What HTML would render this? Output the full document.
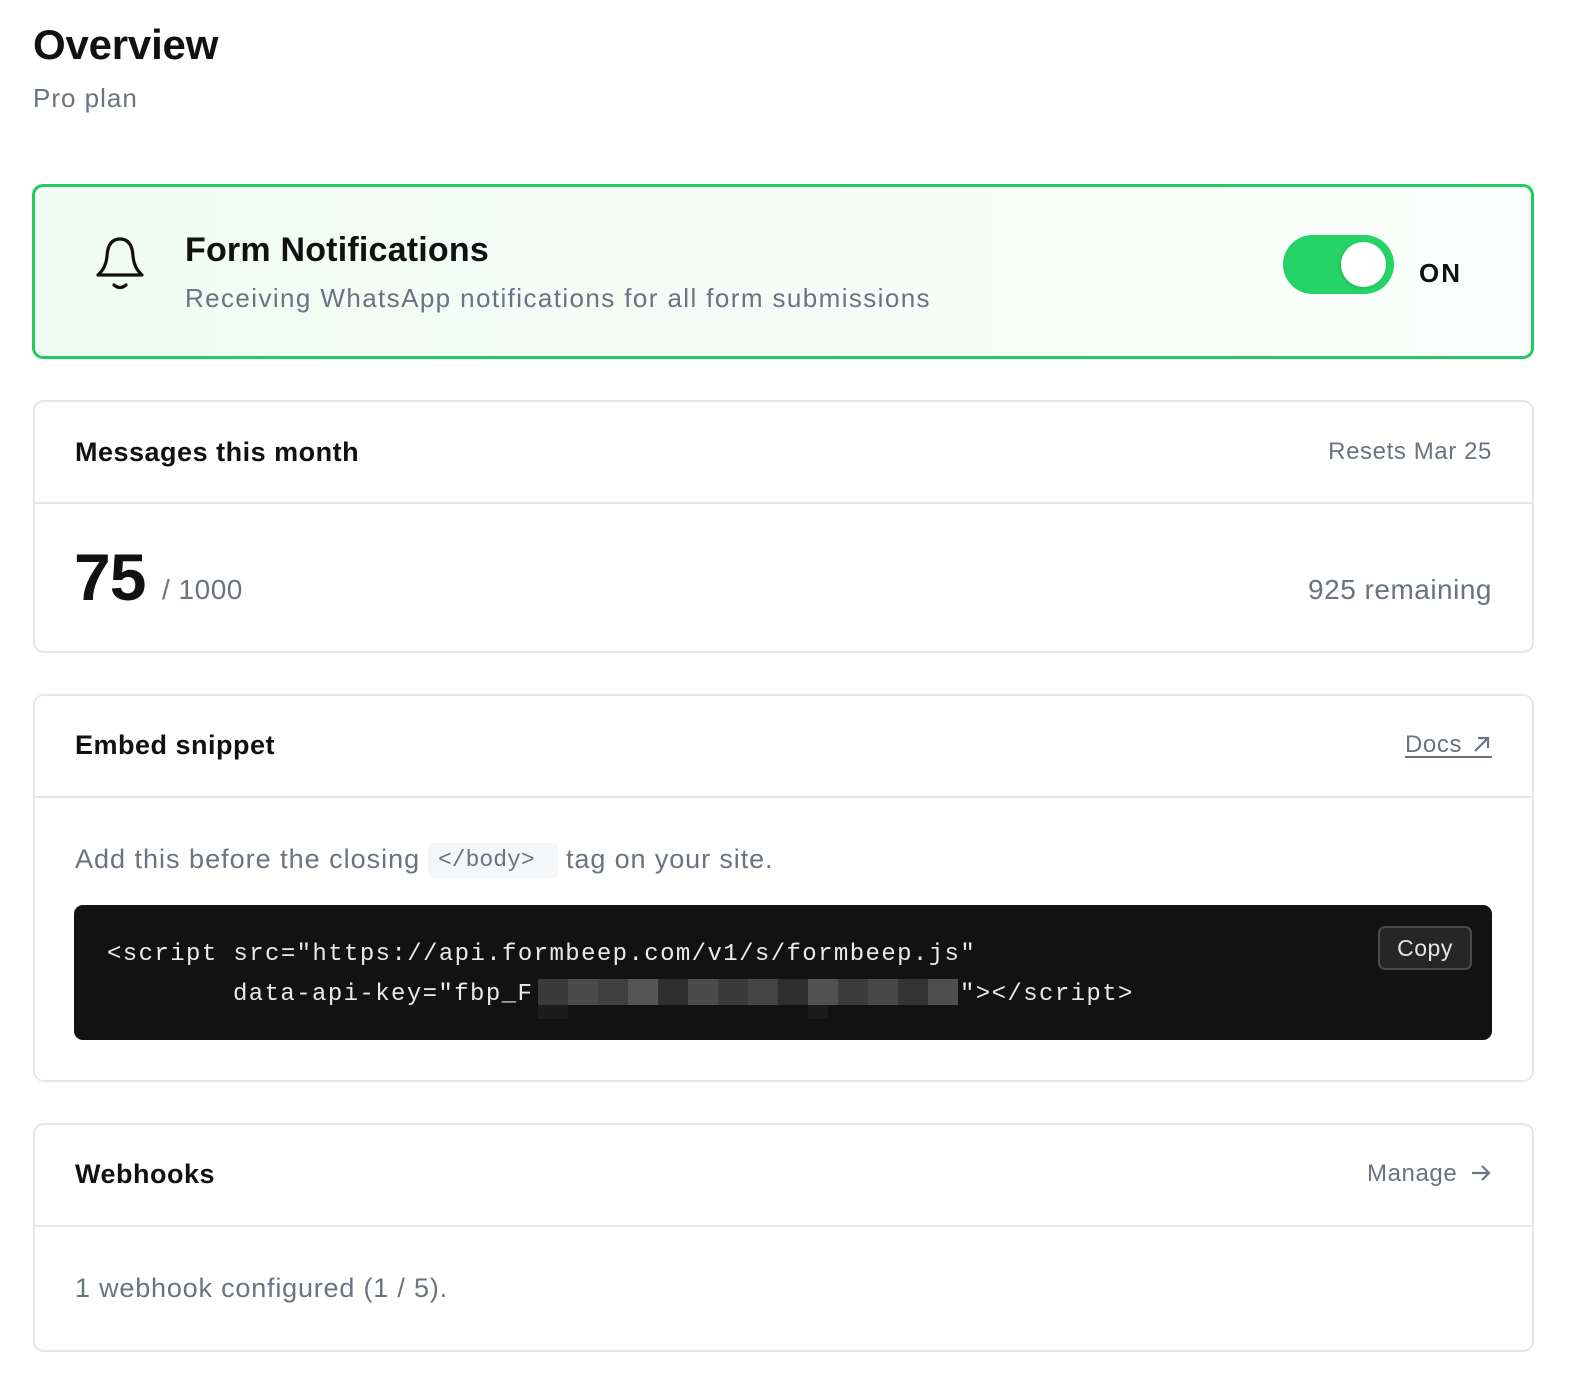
<!DOCTYPE html>
<html><head><meta charset="utf-8">
<style>
*{margin:0;padding:0;box-sizing:border-box}
body{width:1570px;height:1374px;background:#fff;font-family:"Liberation Sans",Arial,sans-serif;position:relative;overflow:hidden;color:#111}
.a{position:absolute;line-height:1;white-space:nowrap}
.card{position:absolute;left:33px;width:1501px;border:2px solid #e5e7eb;border-radius:11px;background:#fff}
.div{position:absolute;left:0;right:0;height:2px;background:#e5e7eb}
.g{color:#6b7280}
.mono{font-family:"Liberation Mono",monospace}
</style></head><body>
<div class="a" style="left:33px;top:24px;font-size:42px;font-weight:bold;letter-spacing:-0.2px">Overview</div>
<div class="a g" style="left:33px;top:85px;font-size:26px;letter-spacing:1px">Pro plan</div>

<div style="position:absolute;left:32px;top:184px;width:1502px;height:175px;border:3px solid #22cc63;border-radius:11px;background:linear-gradient(90deg,#effbf3,#fbfefc)"></div>
<svg style="position:absolute;left:92px;top:232px" width="56" height="64" viewBox="92 232 56 64">
<path d="M98 275 Q106 268 107 256 Q108 239 120 239 Q132 239 133 256 Q134 268 142 275 Z" fill="none" stroke="#111" stroke-width="3.2" stroke-linejoin="round"/>
<path d="M114 285 Q120 290 126 285" fill="none" stroke="#111" stroke-width="3.2" stroke-linecap="round"/>
</svg>
<div class="a" style="left:185px;top:233px;font-size:34px;font-weight:bold;letter-spacing:0.2px">Form Notifications</div>
<div class="a g" style="left:185px;top:285px;font-size:26px;letter-spacing:1.4px">Receiving WhatsApp notifications for all form submissions</div>
<div style="position:absolute;left:1283px;top:235px;width:111px;height:59px;border-radius:30px;background:#25d366"></div>
<div style="position:absolute;left:1341px;top:242px;width:45px;height:45px;border-radius:50%;background:#fff;box-shadow:-1px 1px 3px rgba(0,0,0,.15)"></div>
<div class="a" style="left:1419px;top:260px;font-size:26px;font-weight:bold;letter-spacing:2px">ON</div>

<div class="card" style="top:400px;height:253px"><div class="div" style="top:100px"></div></div>
<div class="a" style="left:75px;top:439px;font-size:27px;font-weight:bold;letter-spacing:0.5px">Messages this month</div>
<div class="a g" style="right:78px;top:440px;font-size:24px;letter-spacing:0.6px">Resets Mar 25</div>
<div class="a" style="left:74px;top:544px;font-size:66px;font-weight:bold;letter-spacing:-1px">75</div>
<div class="a g" style="left:162px;top:576px;font-size:28px;letter-spacing:0.5px">/ 1000</div>
<div class="a g" style="right:78px;top:576px;font-size:28px;letter-spacing:0.5px">925 remaining</div>

<div class="card" style="top:694px;height:388px"><div class="div" style="top:100px"></div></div>
<div class="a" style="left:75px;top:732px;font-size:27px;font-weight:bold;letter-spacing:0.5px">Embed snippet</div>
<div class="a g" style="left:1405px;top:733px;font-size:24px;letter-spacing:0.6px">Docs</div>
<svg style="position:absolute;left:1472px;top:734px" width="20" height="20" viewBox="0 0 20 20"><path d="M3 17 L16 4 M6 4 H16 V14" fill="none" stroke="#6b7280" stroke-width="2.2"/></svg>
<div style="position:absolute;left:1405px;top:756px;width:87px;height:2px;background:#6b7280"></div>
<div class="a g" style="left:75px;top:846px;font-size:27px;letter-spacing:1px">Add this before the closing</div>
<div style="position:absolute;left:428px;top:843px;width:130px;height:35px;background:#f5f6f8;border-radius:5px"></div>
<div class="a g mono" style="left:438px;top:849px;font-size:23px">&lt;/body&gt;</div>
<div class="a g" style="left:566px;top:846px;font-size:27px;letter-spacing:0.9px">tag on your site.</div>
<div style="position:absolute;left:74px;top:905px;width:1418px;height:135px;background:#121212;border-radius:9px"></div>
<div class="a mono" style="left:107px;top:943px;font-size:24px;color:#eaeaea;letter-spacing:1.4px">&lt;script src="https://api.formbeep.com/v1/s/formbeep.js"</div>
<div class="a mono" style="left:233px;top:983px;font-size:24px;color:#eaeaea;letter-spacing:1.4px">data-api-key="fbp_F</div>
<div style="position:absolute;left:538px;top:979px;width:420px;height:26px;display:flex">
<div style="flex:1;background:#3a3a3a"></div><div style="flex:1;background:#4a4a4a"></div><div style="flex:1;background:#3f3f3f"></div><div style="flex:1;background:#555"></div><div style="flex:1;background:#2e2e2e"></div><div style="flex:1;background:#4b4b4b"></div><div style="flex:1;background:#3a3a3a"></div><div style="flex:1;background:#444"></div><div style="flex:1;background:#2f2f2f"></div><div style="flex:1;background:#515151"></div><div style="flex:1;background:#3c3c3c"></div><div style="flex:1;background:#474747"></div><div style="flex:1;background:#333"></div><div style="flex:1;background:#4e4e4e"></div>
</div>
<div style="position:absolute;left:538px;top:1005px;width:30px;height:14px;background:#1c1c1c"></div>
<div style="position:absolute;left:808px;top:1005px;width:20px;height:14px;background:#1c1c1c"></div>
<div class="a mono" style="left:960px;top:983px;font-size:24px;color:#eaeaea;letter-spacing:1.4px">"&gt;&lt;/script&gt;</div>
<div style="position:absolute;left:1378px;top:926px;width:94px;height:44px;border:2px solid #4a4a4a;border-radius:7px;background:#262626"></div>
<div class="a" style="left:1378px;width:94px;text-align:center;top:937px;font-size:23px;color:#e5e5e5;letter-spacing:0.5px">Copy</div>

<div class="card" style="top:1123px;height:229px"><div class="div" style="top:100px"></div></div>
<div class="a" style="left:75px;top:1161px;font-size:27px;font-weight:bold;letter-spacing:0.5px">Webhooks</div>
<div class="a g" style="left:1367px;top:1162px;font-size:24px;letter-spacing:0.6px">Manage</div>
<svg style="position:absolute;left:1470px;top:1163px" width="22" height="20" viewBox="0 0 22 20"><path d="M2 10 H19 M12 3 L19 10 L12 17" fill="none" stroke="#6b7280" stroke-width="2.2"/></svg>
<div class="a g" style="left:75px;top:1275px;font-size:27px;letter-spacing:0.8px">1 webhook configured (1 / 5).</div>
</body></html>
